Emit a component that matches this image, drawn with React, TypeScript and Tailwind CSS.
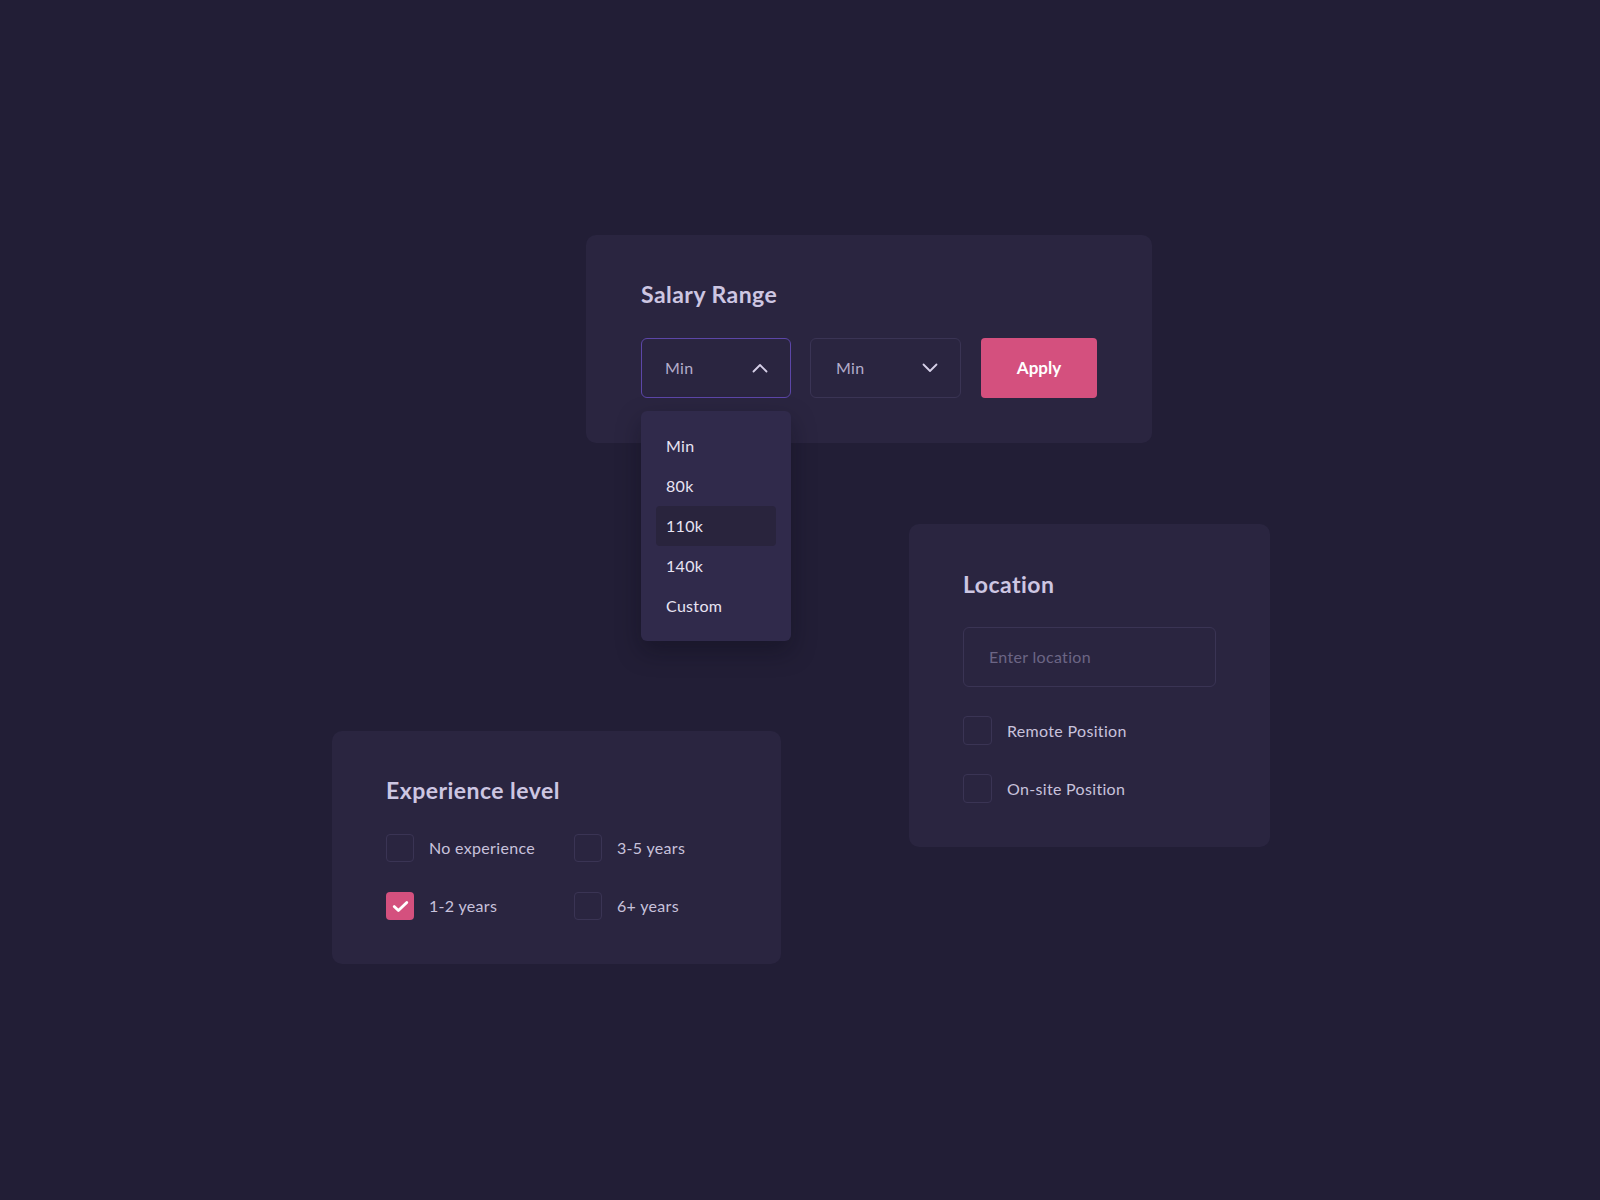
import React from "react";

const font = { fontFamily: "Lato, 'Noto Sans', sans-serif" };

function Chevron({ up }: { up?: boolean }) {
  return (
    <svg width="16" height="10" viewBox="0 0 16 10" fill="none" className="shrink-0">
      <path
        d={up ? "M1.5 8.5 L8 2 L14.5 8.5" : "M1.5 1.5 L8 8 L14.5 1.5"}
        stroke="#d6d0e8"
        strokeWidth="1.8"
        strokeLinecap="round"
        strokeLinejoin="round"
      />
    </svg>
  );
}

function Box({ checked, size }: { checked?: boolean; size: string }) {
  if (checked) {
    return (
      <div className={`${size} rounded-[4px] bg-[#d4507e] flex items-center justify-center shrink-0`}>
        <svg width="17" height="13" viewBox="0 0 17 13" fill="none">
          <path d="M2.2 6.6 L6.4 10.6 L14.8 2.4" stroke="#ffffff" strokeWidth="2.8" strokeLinecap="round" strokeLinejoin="round" />
        </svg>
      </div>
    );
  }
  return <div className={`${size} rounded-[4px] border-[1.5px] border-[#3a3454] shrink-0`} />;
}

function Check({ label, checked, big }: { label: string; checked?: boolean; big?: boolean }) {
  return (
    <div className={big ? "flex items-center gap-[15px] h-[29px]" : "flex items-center gap-[15px] h-[28px]"}>
      <Box checked={checked} size={big ? "w-[29px] h-[29px]" : "w-[28px] h-[28px]"} />
      <span className="text-[16px] tracking-[0.02em] text-[#c8c2dc]">{label}</span>
    </div>
  );
}

function Title({ children }: { children: React.ReactNode }) {
  return <h2 className="text-[23px] leading-[28px] font-bold tracking-[0.02em] text-[#cdc6e2]">{children}</h2>;
}

const options = ["Min", "80k", "110k", "140k", "Custom"];

export default function App() {
  return (
    <div className="min-h-[1200px] w-full bg-[#221e36] pt-[235px]" style={font}>
      {/* Salary range */}
      <div className="ml-[586px] w-[566px] rounded-[10px] bg-[#2a2540] px-[55px] pt-[45px] pb-[45px] relative">
        <Title>Salary Range</Title>
        <div className="mt-[30px] flex items-center gap-[19px]">
          <div className="relative">
            <div className="w-[150px] h-[60px] rounded-[6px] border-[1.5px] border-[#5c46a8] flex items-center justify-between pl-[23px] pr-[22px]">
              <span className="text-[16px] tracking-[0.02em] text-[#b4adcb]">Min</span>
              <Chevron up />
            </div>
            <div className="absolute left-0 top-[73px] w-[150px] rounded-[6px] bg-[#302a4b] p-[15px] shadow-[0_10px_24px_rgba(10,8,20,0.35)] z-10">
              {options.map((o) => (
                <div
                  key={o}
                  className={
                    o === "110k"
                      ? "h-[40px] flex items-center pl-[10px] rounded-[4px] bg-[#29243d] text-[16px] tracking-[0.02em] text-[#e8e4f3]"
                      : "h-[40px] flex items-center pl-[10px] text-[16px] tracking-[0.02em] text-[#e8e4f3]"
                  }
                >
                  {o}
                </div>
              ))}
            </div>
          </div>
          <div className="w-[151px] h-[60px] rounded-[6px] border-[1.5px] border-[#3a3454] flex items-center justify-between pl-[25px] pr-[22px]">
            <span className="text-[16px] tracking-[0.02em] text-[#b4adcb]">Min</span>
            <Chevron />
          </div>
          <button className="ml-[1px] w-[116px] h-[60px] rounded-[4px] bg-[#d4507e] text-white text-[17px] font-bold">
            Apply
          </button>
        </div>
      </div>

      <div className="flex items-start">
        {/* Experience level */}
        <div className="ml-[332px] mt-[288px] w-[449px] rounded-[10px] bg-[#2a2540] px-[54px] pt-[45px] pb-[44px]">
          <Title>Experience level</Title>
          <div className="mt-[30px] grid grid-cols-[188px_1fr] gap-y-[30px]">
            <Check label="No experience" />
            <Check label="3-5 years" />
            <Check label="1-2 years" checked />
            <Check label="6+ years" />
          </div>
        </div>

        {/* Location */}
        <div className="ml-[128px] mt-[81px] w-[361px] rounded-[10px] bg-[#2a2540] px-[54px] pt-[46px] pb-[44px]">
          <Title>Location</Title>
          <div className="mt-[29px] h-[60px] rounded-[6px] border-[1.5px] border-[#3a3454] flex items-center pl-[25px]">
            <span className="text-[16px] tracking-[0.02em] text-[#6c6585]">Enter location</span>
          </div>
          <div className="mt-[29px] flex flex-col gap-[29px]">
            <Check label="Remote Position" big />
            <Check label="On-site Position" big />
          </div>
        </div>
      </div>
    </div>
  );
}
